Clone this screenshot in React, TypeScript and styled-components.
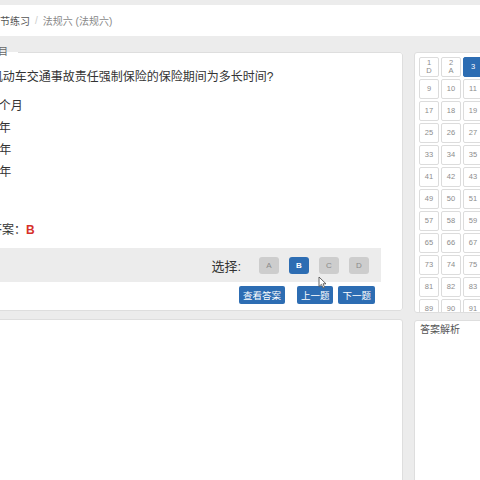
import styled, { createGlobalStyle } from "styled-components";

const GlobalStyle = createGlobalStyle`
  html, body {
    margin: 0;
    padding: 0;
    background: #ececec;
    overflow: hidden;
    font-family: "Liberation Sans", "Noto Sans CJK SC", sans-serif;
  }
  * { box-sizing: border-box; }
`;

const blue = "#2d6db3";

const Shell = styled.div`
  position: relative;
  width: 700px;
  margin-left: -50px;
  padding-top: 5px;
  height: 480px;
`;

const Breadcrumb = styled.div`
  height: 31px;
  background: #fff;
  display: flex;
  align-items: center;
  padding-left: 40px;
  font-size: 10px;
  color: #555;

  .sep {
    color: #ccc;
    padding: 0 5px;
  }
  .current {
    color: #888;
  }
`;

const Main = styled.div`
  display: grid;
  grid-template-columns: 443px 220px;
  column-gap: 11px;
  align-items: start;
  padding: 10px 0 0 10px;
`;

const LeftColumn = styled.div`
  display: flex;
  flex-direction: column;
  row-gap: 8px;
`;

const QuestionPanel = styled.fieldset`
  margin: 0;
  min-width: 0;
  background: #fff;
  border: 1px solid #dedede;
  border-radius: 3px;
  padding: 8px 0 6px 5px;

  legend {
    margin-left: 12px;
    padding: 0 10px;
    font-size: 10px;
    line-height: 12px;
    color: #666;
  }
`;

const Question = styled.div`
  padding-left: 6px;
  font-size: 12px;
  line-height: 22px;
  color: #333;
`;

const Options = styled.div`
  margin-top: 7px;
  padding-left: 6px;
`;

const Option = styled.div`
  font-size: 12px;
  line-height: 22px;
  color: #333;
`;

const Answer = styled.div`
  margin-top: 36px;
  font-size: 12px;
  line-height: 22px;
  color: #333;

  b {
    color: #d6302a;
    font-weight: 700;
  }
`;

const ChoiceBar = styled.div`
  margin: 7px 21px 0 0;
  height: 34px;
  background: #ececec;
  display: flex;
  align-items: center;
  justify-content: flex-end;
  column-gap: 10px;
  padding-right: 12px;

  .label {
    font-size: 13px;
    color: #333;
    margin-right: 8px;
  }
`;

const ChoiceButton = styled.button<{ $active?: boolean }>`
  width: 20px;
  height: 17px;
  padding: 0;
  border: none;
  border-radius: 3px;
  background: ${({ $active }) => ($active ? blue : "#cdcdcd")};
  color: ${({ $active }) => ($active ? "#fff" : "#8a8a8a")};
  font-family: inherit;
  font-size: 8px;
  font-weight: ${({ $active }) => ($active ? 700 : 400)};
`;

const ActionRow = styled.div`
  margin: 4px 27px 0 0;
  display: flex;
  justify-content: flex-end;
  column-gap: 12px;
`;

const NavGroup = styled.div`
  display: flex;
  column-gap: 5px;
`;

const ActionButton = styled.button`
  height: 18px;
  padding: 0 4px;
  border: none;
  border-radius: 2px;
  background: ${blue};
  color: #fff;
  font-family: inherit;
  font-size: 9.5px;
`;

const BlankPanel = styled.div`
  height: 300px;
  background: #fff;
  border: 1px solid #dedede;
  border-radius: 3px;
`;

const RightColumn = styled.div`
  margin-top: 6px;
  display: flex;
  flex-direction: column;
  row-gap: 7px;
`;

const NumberPanel = styled.div`
  height: 261px;
  overflow: hidden;
  background: #fff;
  border: 1px solid #dedede;
  border-radius: 3px;
  padding: 4px 0 0 4px;
`;

const NumberGrid = styled.div`
  display: grid;
  grid-template-columns: repeat(8, 20px);
  grid-auto-rows: 20px;
  gap: 2px;
`;

const Cell = styled.div<{ $current?: boolean }>`
  display: flex;
  flex-direction: column;
  align-items: center;
  justify-content: center;
  border: 1px solid ${({ $current }) => ($current ? blue : "#dcdcdc")};
  border-radius: 2px;
  background: ${({ $current }) => ($current ? blue : "#fff")};
  color: ${({ $current }) => ($current ? "#fff" : "#8c8c8c")};
  font-size: 7.5px;
  line-height: 8px;
`;

const AnalysisPanel = styled.div`
  height: 200px;
  background: #fff;
  border: 1px solid #dedede;
  border-radius: 3px;
  padding: 2px 5px;
  font-size: 10px;
  line-height: 14px;
  color: #555;
`;

const Pointer = styled.svg`
  position: absolute;
  left: 318px;
  top: 276px;
`;

const answered: Record<number, string> = { 1: "D", 2: "A" };

const App = () => {
  const numbers = Array.from({ length: 100 }, (_, i) => i + 1);
  const options = ["A、3个月", "B、1年", "C、2年", "D、3年"];

  return (
    <>
      <GlobalStyle />
      <Shell>
        <Breadcrumb>
          <span>章节练习</span>
          <span className="sep">/</span>
          <span className="current">法规六 (法规六)</span>
        </Breadcrumb>
        <Main>
          <LeftColumn>
            <QuestionPanel>
              <legend>题目</legend>
              <Question>1、机动车交通事故责任强制保险的保险期间为多长时间?</Question>
              <Options>
                {options.map((o) => (
                  <Option key={o}>{o}</Option>
                ))}
              </Options>
              <Answer>
                正确答案：<b>B</b>
              </Answer>
              <ChoiceBar>
                <span className="label">选择:</span>
                {["A", "B", "C", "D"].map((c) => (
                  <ChoiceButton key={c} $active={c === "B"}>
                    {c}
                  </ChoiceButton>
                ))}
              </ChoiceBar>
              <ActionRow>
                <ActionButton>查看答案</ActionButton>
                <NavGroup>
                  <ActionButton>上一题</ActionButton>
                  <ActionButton>下一题</ActionButton>
                </NavGroup>
              </ActionRow>
            </QuestionPanel>
            <BlankPanel />
          </LeftColumn>
          <RightColumn>
            <NumberPanel>
              <NumberGrid>
                {numbers.map((n) => (
                  <Cell key={n} $current={n === 3}>
                    <span>{n}</span>
                    {answered[n] && <span>{answered[n]}</span>}
                  </Cell>
                ))}
              </NumberGrid>
            </NumberPanel>
            <AnalysisPanel>答案解析</AnalysisPanel>
          </RightColumn>
        </Main>
      </Shell>
      <Pointer width="9" height="13" viewBox="0 0 9 13">
        <path d="M1 1 L1 10.5 L3.4 8.4 L5 12 L6.6 11.3 L5 7.8 L8 7.8 Z" fill="#fff" stroke="#555" strokeWidth="0.9" strokeLinejoin="round" />
      </Pointer>
    </>
  );
};

export default App;
